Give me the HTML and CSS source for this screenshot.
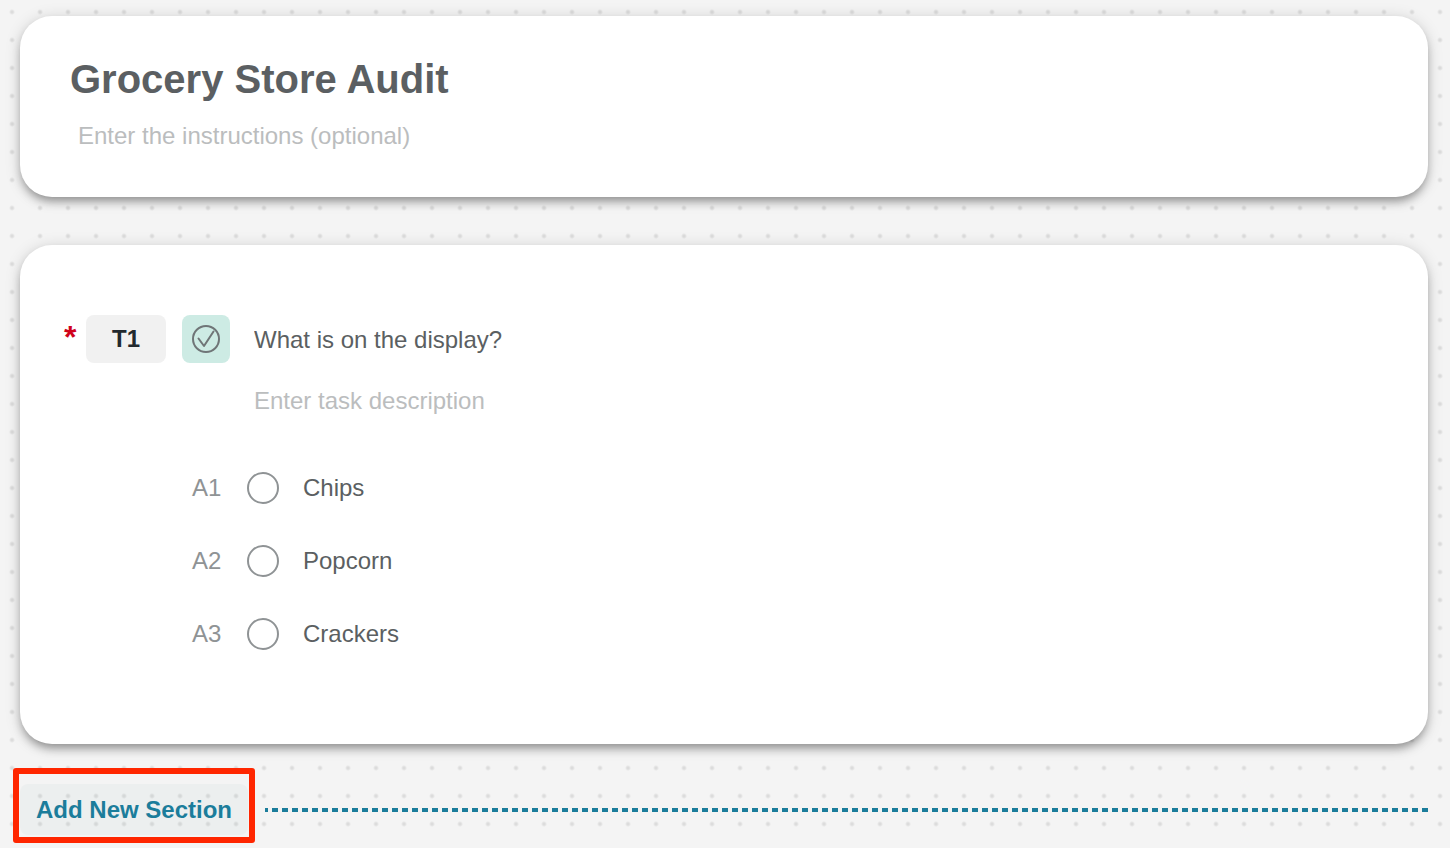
FILE: index.html
```html
<!DOCTYPE html>
<html lang="en">
<head>
    <meta charset="UTF-8">
    <meta name="viewport" content="width=device-width, initial-scale=1.0">
    <title>Grocery Store Audit</title>
    <link rel="stylesheet" href="styles.css">
</head>
<body>
    <main class="builder">
        <section class="card card-header">
            <h1>Grocery Store Audit</h1>
            <input type="text" class="field instructions" placeholder="Enter the instructions (optional)" aria-label="Instructions">
        </section>

        <section class="card card-task">
            <div class="task">
                <span class="required">*</span>
                <span class="task-number">T1</span>
                <button type="button" class="task-type" aria-label="Task type">
                    <svg width="30" height="30" viewBox="0 0 30 30" fill="none" stroke="#6f7577" stroke-width="2">
                        <circle cx="15" cy="15" r="13"/>
                        <path d="M7.5 14.5L13 22L22.5 7.5" stroke-linecap="round" stroke-linejoin="round"/>
                    </svg>
                </button>
                <div class="task-text">
                    <input type="text" class="field" value="What is on the display?" aria-label="Task title">
                    <input type="text" class="field" placeholder="Enter task description" aria-label="Task description">
                </div>
            </div>

            <div class="answers">
                <div class="answer">
                    <span class="answer-number">A1</span>
                    <input type="radio" id="a1" name="answer">
                    <label for="a1">Chips</label>
                </div>
                <div class="answer">
                    <span class="answer-number">A2</span>
                    <input type="radio" id="a2" name="answer">
                    <label for="a2">Popcorn</label>
                </div>
                <div class="answer">
                    <span class="answer-number">A3</span>
                    <input type="radio" id="a3" name="answer">
                    <label for="a3">Crackers</label>
                </div>
            </div>
        </section>

        <div class="add-section">
            <div class="highlight">
                <button type="button" class="btn-add">Add New Section</button>
            </div>
            <div class="divider"></div>
        </div>
    </main>
</body>
</html>
```
FILE: styles.css
```css
* {
    margin: 0;
    padding: 0;
    box-sizing: border-box;
    font-family: "Helvetica Neue", "Liberation Sans", Arial, sans-serif;
}

body {
    background-color: #f4f4f4;
    background-image: radial-gradient(circle, #dcdcdc 1px, transparent 3px);
    background-size: 28px 28px;
    background-position: -2px -2px;
    color: #5b5f62;
    font-size: 24px;
    line-height: 32px;
}

.builder {
    padding: 16px 22px 4px 20px;
}

.card {
    background: #fff;
    border-radius: 32px;
    box-shadow: 0 6px 10px -2px rgba(0, 0, 0, 0.35), 0 2px 16px rgba(0, 0, 0, 0.15);
}

.card-header {
    padding: 39px 50px 45px;
    margin-bottom: 48px;
}

h1 {
    font-size: 40px;
    line-height: 48px;
    margin-bottom: 17px;
}

.field {
    display: block;
    width: 100%;
    border: none;
    outline: none;
    background: transparent;
    color: inherit;
    font-size: 24px;
    height: 32px;
}

.field::placeholder {
    color: #bbbdbe;
}

.instructions {
    padding-left: 8px;
}

.card-task {
    padding: 70px 44px 94px;
}

.task {
    display: flex;
    align-items: flex-start;
}

.required {
    width: 22px;
    color: #d0021b;
    font-size: 32px;
    font-weight: bold;
    line-height: 44px;
}

.task-number,
.task-type {
    height: 48px;
    border-radius: 8px;
    margin-right: 16px;
}

.task-number {
    width: 80px;
    background: #f1f1f1;
    color: #22292e;
    font-weight: bold;
    line-height: 48px;
    text-align: center;
}

.task-type {
    display: flex;
    justify-content: center;
    align-items: center;
    width: 48px;
    border: none;
    background: #cdebe4;
    cursor: pointer;
}

.task-text {
    flex: 1;
    display: flex;
    flex-direction: column;
    gap: 29px;
    padding: 9px 0 0 8px;
}

.answers {
    display: flex;
    flex-direction: column;
    gap: 41px;
    margin: 55px 0 0 128px;
}

.answer {
    display: flex;
    align-items: center;
}

.answer-number {
    width: 55px;
    color: #8f9395;
}

.answer input {
    appearance: none;
    width: 32px;
    height: 32px;
    margin-right: 24px;
    border: 2px solid #8f9395;
    border-radius: 50%;
    cursor: pointer;
}

.answer input:checked {
    border-width: 10px;
}

.add-section {
    display: flex;
    align-items: center;
    margin-top: 24px;
}

/* red frame around the button */
.highlight {
    border: 6px solid #ff2600;
    border-radius: 3px;
    padding: 10px 1px 2px;
    margin: 0 10px 0 -7px;
}

.btn-add {
    display: block;
    height: 51px;
    padding: 0 16px;
    border: none;
    border-radius: 8px;
    background: rgba(0, 80, 80, 0.03);
    color: #1b7d9b;
    font-size: 24px;
    font-weight: bold;
    cursor: pointer;
}

.divider {
    flex: 1;
    height: 4px;
    margin-top: 8px;
    background: repeating-linear-gradient(to left, #1b7d9b 0 6px, transparent 6px 10px);
}
```
